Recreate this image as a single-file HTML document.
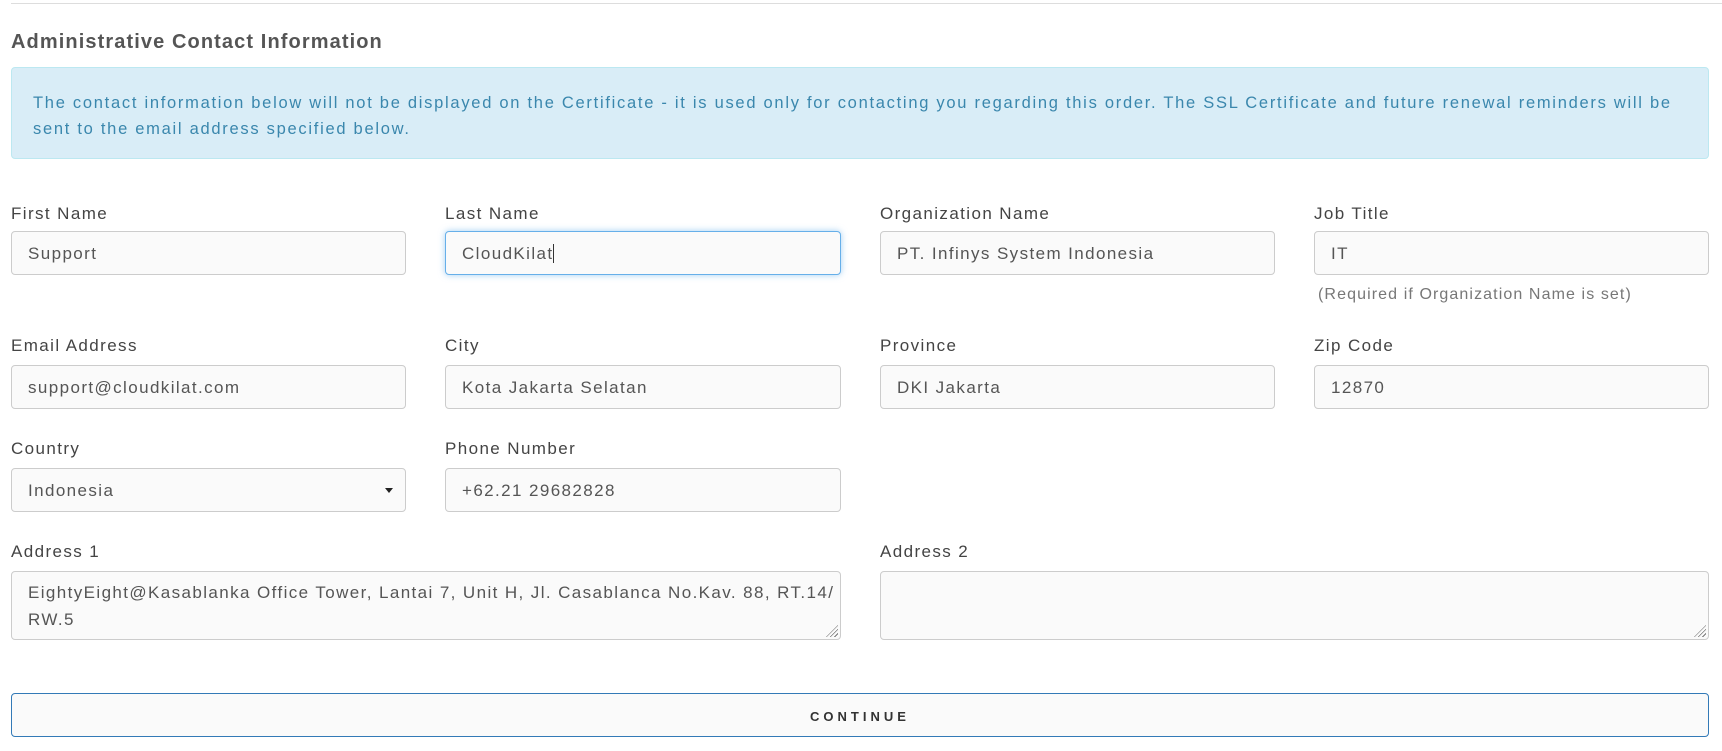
<!DOCTYPE html>
<html><head><meta charset="utf-8"><style>
*{box-sizing:border-box;margin:0;padding:0}
body{width:1722px;height:751px;background:#fff;font-family:"Liberation Sans",sans-serif;color:#444;position:relative;overflow:hidden;letter-spacing:1.4px}
.a{position:absolute}
.hr{left:11px;right:0;top:3px;height:1px;background:#ddd}
h3{position:absolute;left:11px;top:31px;font-size:20px;font-weight:bold;color:#555;letter-spacing:1.1px}
.alert{left:11px;top:67px;width:1698px;height:92px;background:#d9edf7;border:1px solid #bce8f1;border-radius:4px;color:#3a87ad;font-size:16.5px;line-height:26px;padding:22px 21px 0 21px;letter-spacing:1.72px;white-space:nowrap}
.lb{position:absolute;font-size:17px;color:#444}
.in{position:absolute;height:44px;border:1px solid #ccc;border-radius:4px;background:#fafafa;font-size:17px;color:#555;padding:0 16px;line-height:44px;white-space:nowrap}
.foc{border-color:#66afe9;box-shadow:0 0 7px rgba(102,175,233,.6)}
.ta{height:69px;line-height:27px;padding-top:5px;white-space:nowrap}
.grip{position:absolute;right:2px;bottom:2px;width:12px;height:12px;background:repeating-linear-gradient(135deg,transparent 0 2px,#777 2px 3px);clip-path:polygon(100% 0,100% 100%,0 100%)}
.btn{left:11px;top:693px;width:1698px;height:44px;border:1px solid #337ab7;border-radius:4px;background:#fafafa;text-align:center;line-height:46px;font-size:13px;font-weight:bold;letter-spacing:4px;color:#333}
.help{position:absolute;font-size:16px;color:#777;letter-spacing:1.1px}
</style></head><body>
<div class="a hr"></div>
<h3>Administrative Contact Information</h3>
<div class="a alert">The contact information below will not be displayed on the Certificate - it is used only for contacting you regarding this order. The SSL Certificate and future renewal reminders will be<br>sent to the email address specified below.</div>

<div class="lb" style="left:11px;top:204px">First Name</div>
<div class="lb" style="left:445px;top:204px">Last Name</div>
<div class="lb" style="left:880px;top:204px">Organization Name</div>
<div class="lb" style="left:1314px;top:204px">Job Title</div>
<div class="in" style="left:11px;top:231px;width:395px">Support</div>
<div class="in foc" style="left:445px;top:231px;width:396px">CloudKilat<span style="border-left:1px solid #333;margin-left:-1px"></span></div>
<div class="in" style="left:880px;top:231px;width:395px">PT. Infinys System Indonesia</div>
<div class="in" style="left:1314px;top:231px;width:395px">IT</div>
<div class="help" style="left:1318px;top:286px">(Required if Organization Name is set)</div>

<div class="lb" style="left:11px;top:336px">Email Address</div>
<div class="lb" style="left:445px;top:336px">City</div>
<div class="lb" style="left:880px;top:336px">Province</div>
<div class="lb" style="left:1314px;top:336px">Zip Code</div>
<div class="in" style="left:11px;top:365px;width:395px">support@cloudkilat.com</div>
<div class="in" style="left:445px;top:365px;width:396px">Kota Jakarta Selatan</div>
<div class="in" style="left:880px;top:365px;width:395px">DKI Jakarta</div>
<div class="in" style="left:1314px;top:365px;width:395px">12870</div>

<div class="lb" style="left:11px;top:439px">Country</div>
<div class="lb" style="left:445px;top:439px">Phone Number</div>
<div class="in" style="left:11px;top:468px;width:395px">Indonesia<span style="position:absolute;right:12px;top:19px;border-left:4px solid transparent;border-right:4px solid transparent;border-top:5px solid #222"></span></div>
<div class="in" style="left:445px;top:468px;width:396px">+62.21 29682828</div>

<div class="lb" style="left:11px;top:542px">Address 1</div>
<div class="lb" style="left:880px;top:542px">Address 2</div>
<div class="in ta" style="left:11px;top:571px;width:830px;padding-top:7px">EightyEight@Kasablanka Office Tower, Lantai 7, Unit H, Jl. Casablanca No.Kav. 88, RT.14/<br>RW.5<div class="grip"></div></div>
<div class="in ta" style="left:880px;top:571px;width:829px"><div class="grip"></div></div>

<div class="a btn">CONTINUE</div>
</body></html>
